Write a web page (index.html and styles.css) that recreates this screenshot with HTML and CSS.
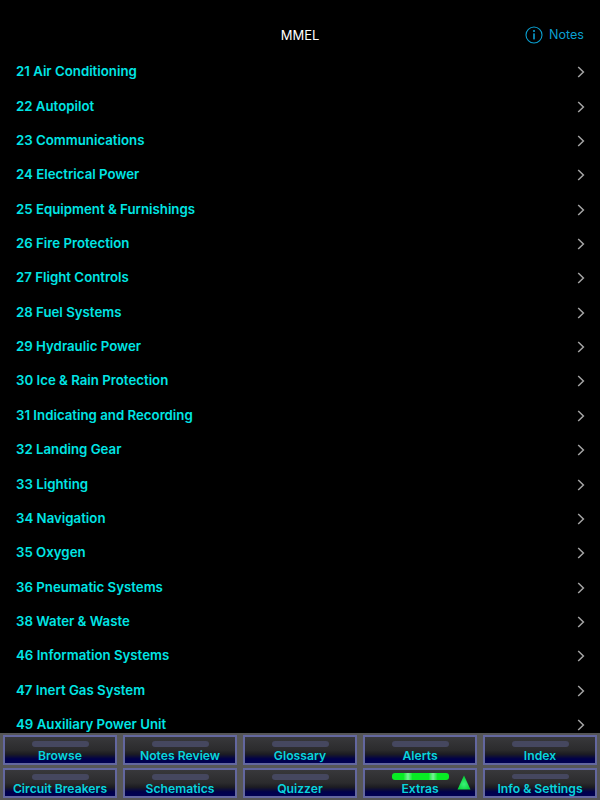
FILE: index.html
```html
<!DOCTYPE html>
<html lang="en">
<head>
  <meta charset="UTF-8">
  <title>MMEL</title>
  <link rel="stylesheet" href="styles.css">
</head>
<body>
  <div class="page">
    <div class="navbar">
      <div class="nav-title">MMEL</div>
      <div class="nav-notes">
        <svg class="info-icon" width="18" height="18" viewBox="0 0 18 18">
          <circle cx="9" cy="9" r="8" fill="none" stroke="#0a9fd0" stroke-width="1.1"/>
          <rect x="8.2" y="7.4" width="1.6" height="6" fill="#0a9fd0"/>
          <circle cx="9" cy="5" r="1.1" fill="#0a9fd0"/>
        </svg>
        <span>Notes</span>
      </div>
    </div>

    <ul class="list">
      <li class="row"><span>21 Air Conditioning</span><svg class="chev" width="8" height="12" viewBox="0 0 8 12"><path d="M1.2 1 L6.4 6 L1.2 11" /></svg></li>
      <li class="row"><span>22 Autopilot</span><svg class="chev" width="8" height="12" viewBox="0 0 8 12"><path d="M1.2 1 L6.4 6 L1.2 11" /></svg></li>
      <li class="row"><span>23 Communications</span><svg class="chev" width="8" height="12" viewBox="0 0 8 12"><path d="M1.2 1 L6.4 6 L1.2 11" /></svg></li>
      <li class="row"><span>24 Electrical Power</span><svg class="chev" width="8" height="12" viewBox="0 0 8 12"><path d="M1.2 1 L6.4 6 L1.2 11" /></svg></li>
      <li class="row"><span>25 Equipment &amp; Furnishings</span><svg class="chev" width="8" height="12" viewBox="0 0 8 12"><path d="M1.2 1 L6.4 6 L1.2 11" /></svg></li>
      <li class="row"><span>26 Fire Protection</span><svg class="chev" width="8" height="12" viewBox="0 0 8 12"><path d="M1.2 1 L6.4 6 L1.2 11" /></svg></li>
      <li class="row"><span>27 Flight Controls</span><svg class="chev" width="8" height="12" viewBox="0 0 8 12"><path d="M1.2 1 L6.4 6 L1.2 11" /></svg></li>
      <li class="row"><span>28 Fuel Systems</span><svg class="chev" width="8" height="12" viewBox="0 0 8 12"><path d="M1.2 1 L6.4 6 L1.2 11" /></svg></li>
      <li class="row"><span>29 Hydraulic Power</span><svg class="chev" width="8" height="12" viewBox="0 0 8 12"><path d="M1.2 1 L6.4 6 L1.2 11" /></svg></li>
      <li class="row"><span>30 Ice &amp; Rain Protection</span><svg class="chev" width="8" height="12" viewBox="0 0 8 12"><path d="M1.2 1 L6.4 6 L1.2 11" /></svg></li>
      <li class="row"><span>31 Indicating and Recording</span><svg class="chev" width="8" height="12" viewBox="0 0 8 12"><path d="M1.2 1 L6.4 6 L1.2 11" /></svg></li>
      <li class="row"><span>32 Landing Gear</span><svg class="chev" width="8" height="12" viewBox="0 0 8 12"><path d="M1.2 1 L6.4 6 L1.2 11" /></svg></li>
      <li class="row"><span>33 Lighting</span><svg class="chev" width="8" height="12" viewBox="0 0 8 12"><path d="M1.2 1 L6.4 6 L1.2 11" /></svg></li>
      <li class="row"><span>34 Navigation</span><svg class="chev" width="8" height="12" viewBox="0 0 8 12"><path d="M1.2 1 L6.4 6 L1.2 11" /></svg></li>
      <li class="row"><span>35 Oxygen</span><svg class="chev" width="8" height="12" viewBox="0 0 8 12"><path d="M1.2 1 L6.4 6 L1.2 11" /></svg></li>
      <li class="row"><span>36 Pneumatic Systems</span><svg class="chev" width="8" height="12" viewBox="0 0 8 12"><path d="M1.2 1 L6.4 6 L1.2 11" /></svg></li>
      <li class="row"><span>38 Water &amp; Waste</span><svg class="chev" width="8" height="12" viewBox="0 0 8 12"><path d="M1.2 1 L6.4 6 L1.2 11" /></svg></li>
      <li class="row"><span>46 Information Systems</span><svg class="chev" width="8" height="12" viewBox="0 0 8 12"><path d="M1.2 1 L6.4 6 L1.2 11" /></svg></li>
      <li class="row"><span>47 Inert Gas System</span><svg class="chev" width="8" height="12" viewBox="0 0 8 12"><path d="M1.2 1 L6.4 6 L1.2 11" /></svg></li>
      <li class="row"><span>49 Auxiliary Power Unit</span><svg class="chev" width="8" height="12" viewBox="0 0 8 12"><path d="M1.2 1 L6.4 6 L1.2 11" /></svg></li>
    </ul>

    <div class="toolbar">
      <div class="tool"><div class="lamp"></div><div class="tool-label">Browse</div></div>
      <div class="tool"><div class="lamp"></div><div class="tool-label">Notes Review</div></div>
      <div class="tool"><div class="lamp"></div><div class="tool-label">Glossary</div></div>
      <div class="tool"><div class="lamp"></div><div class="tool-label">Alerts</div></div>
      <div class="tool"><div class="lamp"></div><div class="tool-label">Index</div></div>
      <div class="tool"><div class="lamp"></div><div class="tool-label">Circuit Breakers</div></div>
      <div class="tool"><div class="lamp"></div><div class="tool-label">Schematics</div></div>
      <div class="tool"><div class="lamp"></div><div class="tool-label">Quizzer</div></div>
      <div class="tool">
        <div class="lamp lamp-on"></div>
        <div class="tool-label">Extras</div>
        <svg class="arrow" width="14" height="16" viewBox="0 0 14 16">
          <defs>
            <radialGradient id="arrowGlow" cx="50%" cy="62%" r="50%">
              <stop offset="0%" stop-color="#3cf07a"/>
              <stop offset="100%" stop-color="#08d63a"/>
            </radialGradient>
          </defs>
          <polygon points="7,0.5 13.5,14.5 0.5,14.5" fill="url(#arrowGlow)"/>
        </svg>
      </div>
      <div class="tool"><div class="lamp"></div><div class="tool-label label-low">Info &amp; Settings</div></div>
    </div>
  </div>
</body>
</html>
```

FILE: styles.css
```css
body {
  margin: 0;
  padding: 0;
  background-color: #000;
  font-family: Inter, "Liberation Sans", sans-serif;
}

.page {
  width: 600px;
  height: 800px;
  display: flex;
  flex-direction: column;
  overflow: hidden;
}

.navbar {
  flex: none;
  height: 54.04px;
  padding-top: 16px;
  box-sizing: border-box;
  display: flex;
  justify-content: center;
  position: relative;
}

.nav-title {
  color: #fff;
  font-size: 13px;
  font-weight: 400;
  line-height: 38px;
}

.nav-notes {
  position: absolute;
  right: 16px;
  top: 26px;
  display: flex;
  align-items: center;
  gap: 6px;
  color: #0a9fd0;
  font-size: 12.6px;
  line-height: 18px;
}

.list {
  flex: 1;
  min-height: 0;
  margin: 0;
  padding: 0;
  list-style: none;
  overflow: hidden;
}

.row {
  height: 34.37px;
  padding: 0 16px;
  display: flex;
  align-items: center;
  justify-content: space-between;
  color: #00e5e5;
  font-size: 13.25px;
  font-weight: 600;
}

.chev {
  margin-right: -1px;
  margin-top: 2px;
}

.chev path {
  fill: none;
  stroke: #a4a4a4;
  stroke-width: 1.5;
}

.toolbar {
  flex: none;
  height: 67px;
  box-sizing: border-box;
  padding: 2px 3px 2px;
  background-color: #565656;
  display: grid;
  grid-template-columns: repeat(5, 114px);
  grid-template-rows: 30px 30px;
  column-gap: 6px;
  row-gap: 3px;
}

.tool {
  position: relative;
  box-sizing: border-box;
  border: 2px solid #63679f;
  background: linear-gradient(#38383b 0%, #2b2b2d 50%, #1c1c22 66%, #00004a 84%, #000052 100%);
  display: flex;
  flex-direction: column;
  align-items: center;
}

.lamp {
  width: 57px;
  height: 6px;
  margin-top: 4px;
  border-radius: 3px;
  background-color: #45475f;
}

.lamp-on {
  height: 7px;
  margin-top: 3px;
  background: linear-gradient(90deg, #08ec24 0%, #08ec24 20%, #78f098 28%, #08ec24 36%, #08ec24 64%, #78f098 72%, #08ec24 80%);
}

.tool-label {
  color: #08d4dc;
  font-size: 12.2px;
  font-weight: 600;
  line-height: 15px;
  margin-top: 1px;
  white-space: nowrap;
}

.label-low {
  margin-top: 2px;
}

.arrow {
  position: absolute;
  right: 4px;
  top: 5px;
}
```
